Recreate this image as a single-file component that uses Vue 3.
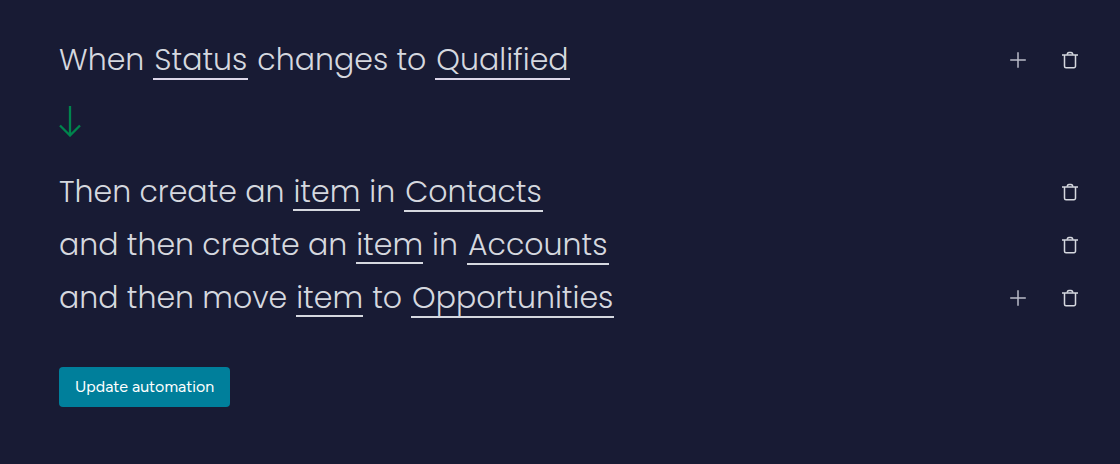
<script setup>
const groups = [
  {
    name: 'Trigger',
    rows: [
      {
        canAdd: true,
        parts: [{ text: 'When' }, { text: 'Status', field: true }, { text: 'changes to' }, { text: 'Qualified', field: true }],
      },
    ],
  },
  {
    name: 'Actions',
    rows: [
      {
        parts: [{ text: 'Then create an' }, { text: 'item', kind: true }, { text: 'in' }, { text: 'Contacts', field: true }],
      },
      {
        parts: [{ text: 'and then create an' }, { text: 'item', kind: true }, { text: 'in' }, { text: 'Accounts', field: true }],
      },
      {
        canAdd: true,
        parts: [{ text: 'and then move' }, { text: 'item', kind: true }, { text: 'to' }, { text: 'Opportunities', field: true }],
      },
    ],
  },
]
</script>

<template>
  <main class="recipe">
    <template v-for="(group, g) in groups" :key="group.name">
      <svg v-if="g > 0" class="arrow" viewBox="0 0 22 31" aria-hidden="true">
        <path d="M11 0V29.5M1 19.5l10 10 10-10" />
      </svg>
      <section class="group" :aria-label="group.name">
        <div v-for="(row, r) in group.rows" :key="r" class="row">
          <div class="sentence" :class="{ trigger: g === 0 }">
            <template v-for="(part, p) in row.parts" :key="p">
              <button v-if="part.field || part.kind" type="button" class="token" :class="{ kind: part.kind }">{{ part.text }}</button>
              <span v-else>{{ part.text }}</span>
            </template>
          </div>
          <div class="tools">
            <button v-if="row.canAdd" type="button" class="tool" aria-label="Add">
              <svg viewBox="0 0 20 20"><path class="plus" d="M10 2.2v15.6M2.2 10h15.6" /></svg>
            </button>
            <button type="button" class="tool" aria-label="Delete">
              <svg viewBox="0 0 20 20">
                <path d="M2 5h16" />
                <path d="M4.5 5v11.2a1.5 1.5 0 0 0 1.5 1.5h8a1.5 1.5 0 0 0 1.5-1.5V5" />
                <path d="M7.2 4.8c.1-1.700.8-2.300 1.800-2.300h2c1 0 1.700.6 1.800 2.300" />
              </svg>
            </button>
          </div>
        </div>
      </section>
    </template>
    <button type="button" class="submit">Update automation</button>
  </main>
</template>

<style>
body {
  margin: 0;
  background: #181b34;
}
</style>

<style scoped>
.recipe {
  box-sizing: border-box;
  min-height: 100vh;
  padding: 34px 40px 56px 59px;
  background: #181b34;
  color: #d5d8df;
  font-family: Poppins, Inter, sans-serif;
}
.row {
  display: flex;
  align-items: center;
  justify-content: space-between;
  min-height: 52px;
}
.group {
  display: grid;
  gap: 1px;
}
.sentence {
  display: flex;
  align-items: baseline;
  gap: 9px;
  padding-top: 3px;
  font-size: 30px;
  font-weight: 300;
  line-height: 34px;
  white-space: nowrap;
}
button {
  border: 0;
  background: none;
  color: inherit;
  font: inherit;
  cursor: pointer;
}
.token {
  padding: 0 1px 1px;
  border-bottom: 2px solid #d5d8df;
}
.token.kind {
  padding: 0;
}
.trigger .token {
  border-color: #dcd6e8;
}
.arrow {
  display: block;
  width: 22px;
  height: 31px;
  margin: 20px 0 29px;
  fill: none;
  stroke: #00854d;
  stroke-width: 2.3;
}
.tools {
  display: flex;
  gap: 32px;
}
.tool {
  width: 20px;
  height: 20px;
  padding: 0;
}
.tool svg {
  display: block;
  width: 20px;
  height: 20px;
  fill: none;
  stroke: #d5d8df;
  stroke-width: 1.5;
}
.tool svg .plus {
  stroke: #b9bcc8;
}
.submit {
  display: block;
  height: 40px;
  margin-top: 43px;
  padding: 0 16px;
  border-radius: 4px;
  background: #007f9b;
  color: #fff;
  font-family: Figtree, Roboto, sans-serif;
  font-size: 16px;
  line-height: 24px;
}
</style>
